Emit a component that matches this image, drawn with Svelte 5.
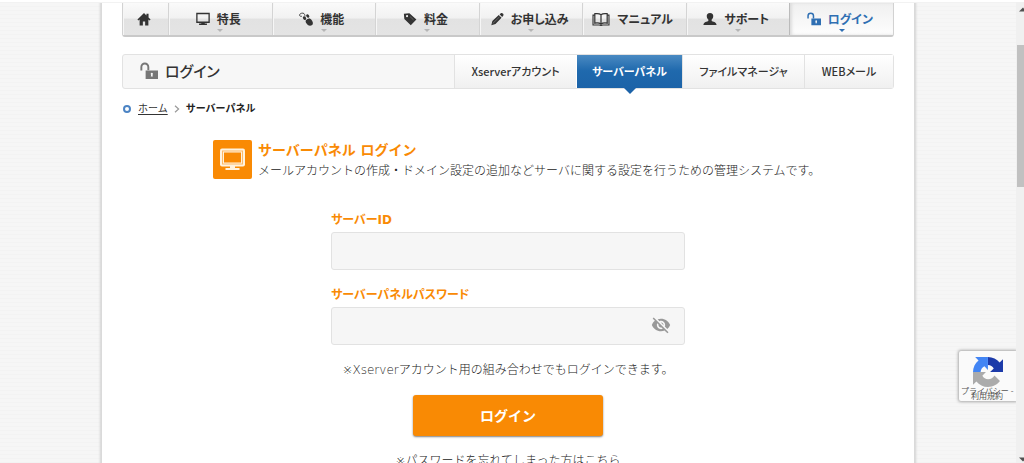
<script>
  const nav = [
    { label: '特長', icon: 'screen', menu: true },
    { label: '機能', icon: 'mouse', menu: true },
    { label: '料金', icon: 'tag', menu: true },
    { label: 'お申し込み', icon: 'pencil', menu: true },
    { label: 'マニュアル', icon: 'book', menu: false },
    { label: 'サポート', icon: 'person', menu: true },
    { label: 'ログイン', icon: 'lock', menu: true, active: true },
  ];
  const tabs = [
    { label: 'Xserverアカウント', size: 'wide' },
    { label: 'サーバーパネル', size: 'mid', active: true },
    { label: 'ファイルマネージャ', size: 'wide' },
    { label: 'WEBメール', size: 'small' },
  ];
  let visible = $state(false);
  let serverId = $state('');
  let password = $state('');
</script>

{#snippet icon(name)}
  <svg class="icon" class:large={name === 'book'} viewBox="0 0 16 16" aria-hidden="true">
    {#if name === 'home'}
      <path fill="currentColor" d="M8 1 .5 8.600l1 1L3 8.700V15.500h3.700v-4.700h2.600v4.700H13V8.700l1.500.9 1-1-2.300-2.200V1.900h-2.400V4z" />
    {:else if name === 'screen'}
      <path fill="none" stroke="currentColor" stroke-width="1.5" d="M1 1.700h14v10H1z" />
      <path fill="currentColor" d="M6 12h4v1.200h2.500v1.600h-9v-1.600H6z" />
    {:else if name === 'mouse'}
      <path fill="none" stroke="currentColor" stroke-width="1" d="M7 5C6.500 3.500 6.500 1.500 4.500 1.300 2.500 1.200.8 2 .6 3.500.6 4.800 2.200 5.200 3.400 4.800" />
      <path fill="currentColor" d="M7.800 9.500C9.200 7.900 11 6.900 12.400 7.500c2.200 1 4 4.300 3.400 6.300-.8 2.200-4 2.500-5.700 1C8.400 13.500 6.900 11 7.800 9.500z" />
      <ellipse cx="6.300" cy="7" rx="1.700" ry="2.300" fill="currentColor" transform="rotate(-35 6.300 7)" />
      <ellipse cx="10" cy="4.600" rx="1.600" ry="2.200" fill="currentColor" transform="rotate(-35 10 4.600)" />
    {:else if name === 'tag'}
      <path fill="currentColor" fill-rule="evenodd" d="M1 2 7.300 1.500l8 7-6.400 6.700L1.500 8zM4.600 3.500a1.200 1.200 0 1 0 .1 2.400 1.200 1.200 0 0 0-.1-2.400z" />
      <path d="M8 5.200l4 3.700" stroke="#777" stroke-width=".8" />
    {:else if name === 'pencil'}
      <path fill="currentColor" d="M1.500 15 2.700 10.200 10 3.500l3.200 3.200-6.900 6.900zM10.900 2.700l1.600-1.400c.7-.5 1.500-.3 2.500.8.600.8.600 1.600.1 2.200l-1.200 1.500z" />
      <path d="M3 13.300 11 5.400" stroke="#999" stroke-width=".6" />
    {:else if name === 'book'}
      <path fill="none" stroke="currentColor" stroke-width="1.100" d="M8 4.200C6.600 3 4.500 3 2.500 3.300v8.400c2-.3 4.100-.3 5.500.9 1.400-1.200 3.500-1.200 5.500-.9V3.300C11.500 3 9.400 3 8 4.200zv8.400" />
      <path fill="none" stroke="currentColor" stroke-width="1" d="M2.500 4.600H.9v8.700h5.300c1 0 1.200.5 1.800.5s.8-.5 1.800-.5h5.300V4.600h-1.600" />
    {:else if name === 'person'}
      <path fill="currentColor" d="M8 1c2.600 0 3.900 1.500 3.700 3.800-.1 1.900-.9 3.200-1.800 3.900v1.600c1 .8 5.600 1 5.600 4.500H.5c0-3.500 4.600-3.700 5.600-4.500V8.700C5.200 8 4.400 6.700 4.300 4.800 4.100 2.500 5.400 1 8 1z" />
    {:else if name === 'lock'}
      <path fill="none" stroke="currentColor" stroke-width="1.700" d="M1.200 7.500V4.400a3.100 3.100 0 0 1 6.200 0v3" />
      <path fill="currentColor" fill-rule="evenodd" d="M5 7.500h11v7.500H5zM10.500 9.500a1 1 0 0 0-.6 1.800l-.3 1.600h1.800l-.3-1.600a1 1 0 0 0-.6-1.800z" />
    {/if}
  </svg>
{/snippet}

<div class="window">
  <div class="view">
    <div class="page">
      <nav class="global" aria-label="メイン">
        <a class="home" href="#home" aria-label="ホーム">{@render icon('home')}</a>
        {#each nav as item}
          <a href="#{item.icon}" class:active={item.active} class:menu={item.menu}>
            {@render icon(item.icon)}<span>{item.label}</span>
          </a>
        {/each}
      </nav>

      <header class="titlebar">
        <h1>{@render icon('lock')}<span>ログイン</span></h1>
        <nav class="tabs" aria-label="ログイン">
          {#each tabs as tab}
            <a href="#{tab.label}" class={tab.size} class:active={tab.active}>{tab.label}</a>
          {/each}
        </nav>
      </header>

      <div class="crumbs">
        <i class="ring"></i>
        <a href="#home">ホーム</a>
        <svg class="chev" viewBox="0 0 6 8" aria-hidden="true"><path d="M1 .8 4.600 4 1 7.200" fill="none" stroke="#999" stroke-width="1.200" /></svg>
        <b>サーバーパネル</b>
      </div>

      <section class="intro">
        <svg class="badge" viewBox="0 0 39 39" aria-hidden="true">
          <rect width="39" height="39" rx="2" fill="#f98a04" />
          <rect x="7" y="8.500" width="25" height="18" rx="2" fill="#fff3df" />
          <rect x="9" y="10.500" width="21" height="14" fill="#fcb968" />
          <rect x="10" y="11.500" width="19" height="12" fill="#fff3df" />
          <rect x="11" y="12.500" width="17" height="10" fill="#f98a04" />
          <path d="M17 26h5v2h4.500v2h-14v-2H17z" fill="#fff3df" />
        </svg>
        <div>
          <h2>サーバーパネル ログイン</h2>
          <p>メールアカウントの作成・ドメイン設定の追加などサーバに関する設定を行うための管理システムです。</p>
        </div>
      </section>

      <form onsubmit={(e) => e.preventDefault()}>
        <label for="server-id">サーバーID</label>
        <input id="server-id" type="text" bind:value={serverId} />
        <label for="server-pass">サーバーパネルパスワード</label>
        <div class="field">
          <input id="server-pass" type={visible ? 'text' : 'password'} bind:value={password} />
          <button type="button" class="eye" aria-label="パスワードを表示" onclick={() => (visible = !visible)}>
            <svg viewBox="0 0 24 24" aria-hidden="true"><path fill="#999" d="M12 7c2.760 0 5 2.240 5 5 0 .650-.130 1.260-.360 1.830l2.920 2.920c1.510-1.260 2.700-2.890 3.430-4.750-1.730-4.390-6-7.500-11-7.500-1.400 0-2.740.250-3.980.700l2.160 2.160C10.740 7.130 11.350 7 12 7zM2 4.270l2.280 2.280.460.460C3.080 8.300 1.780 10.020 1 12c1.730 4.390 6 7.500 11 7.500 1.550 0 3.030-.300 4.380-.840l.420.420L19.730 22 21 20.730 3.270 3 2 4.270zM7.530 9.800l1.550 1.550c-.050.210-.080.430-.080.650 0 1.660 1.340 3 3 3 .220 0 .440-.030.650-.080l1.550 1.550c-.670.330-1.410.530-2.200.530-2.760 0-5-2.240-5-5 0-.790.200-1.530.530-2.200zm4.310-.780l3.150 3.150.020-.160c0-1.660-1.340-3-3-3l-.170.010z" /></svg>
          </button>
        </div>
        <p>※Xserverアカウント用の組み合わせでもログインできます。</p>
        <button type="submit" class="submit">ログイン</button>
        <p class="forgot">※パスワードを忘れてしまった方はこちら</p>
      </form>
    </div>

    <aside class="captcha">
      <svg viewBox="0 0 64 64" aria-hidden="true">
        <path fill="#1c3aa9" d="M64 31.960c0-.460-.010-.920-.030-1.370V4.600l-7.180 7.180C50.900 4.580 41.960 0 31.950 0v17.200c5.500.3 9.800 3 12.300 7.200L36.500 32z" />
        <path fill="#4285f4" d="M31.860 0c-.460 0-.920.010-1.370.030H4.600l7.180 7.180C4.580 13.100 0 22 0 32h16.200c.4-5.500 3.500-10.200 8.200-12.400l7.460 8z" />
        <path fill="#ababab" d="M0 32.050c0 .460.010.920.030 1.370V59.400l7.180-7.180C13.100 59.400 22.040 64 32.050 64c10.400 0 19.600-4.960 25.500-12.700L45.800 39.400c-2.600 4.700-7.700 7.900-13.600 7.900-5.200 0-9.700-3-12.300-7.300L27.600 32z" />
      </svg>
      <a class="privacy" href="#privacy">プライバシー -</a>
      <a class="terms" href="#terms">利用規約</a>
    </aside>
  </div>
  <div class="scroll" aria-hidden="true">
    <svg viewBox="0 0 8 8"><path d="M3 5.500 7 1.500 11 5.500z" fill="#505050" /></svg>
    <div class="thumb"></div>
    <svg class="down" viewBox="0 0 8 8"><path d="M3 2.500h8L7 6.500z" fill="#505050" /></svg>
  </div>
</div>

<style>
  * { box-sizing: border-box; }
  :global(body) { margin: 0; background: #fff; }
  .window {
    display: flex;
    height: 100vh;
    overflow: hidden;
    border-top: 2px solid #fff;
    font: 12px/16px "DejaVu Sans", "Noto Sans CJK JP", sans-serif;
    color: #333;
  }
  .view {
    position: relative;
    flex: 1;
    min-width: 0;
    overflow: hidden;
    border-top: 1px solid #f2f2f2;
    background: repeating-linear-gradient(#f6f6f6 0 3px, #f3f3f3 3px 4px);
  }
  .page {
    max-width: 812px;
    min-height: 100%;
    margin: 0 auto;
    padding: 0 20px;
    background: #fff;
    box-shadow: 0 0 0 1px #dadada, 0 0 2px 2px #d4d4d4;
  }
  h1, h2, p { margin: 0; }
  a { color: inherit; text-decoration: none; }
  .icon { width: 14px; height: 14px; flex: none; overflow: visible; }
  .icon.large { width: 18px; height: 18px; }

  .global {
    display: flex;
    height: 34px;
    border: 1px solid #d2d2d2;
    border-top: 0;
    border-bottom: 2px solid #c9c9c9;
    border-radius: 0 0 3px 3px;
    background: linear-gradient(#fafafa, #f1f1f1 48%, #e2e2e2 49%, #e4e4e4);
    font-family: "Noto Sans CJK JP", sans-serif;
    font-weight: 700;
    font-feature-settings: "palt";
    color: #333;
  }
  .global a {
    position: relative;
    display: flex;
    flex: 1;
    align-items: center;
    justify-content: center;
    gap: 7px;
    padding-right: 4px;
    border-left: 1px solid #d4d4d4;
    box-shadow: inset 1px 0 #f6f6f6;
  }
  .global .home { flex: 0 0 45px; border-left: 0; }
  .global .menu::after {
    content: "";
    position: absolute;
    left: 50%;
    bottom: 3px;
    margin-left: -3px;
    border: 3px solid transparent;
    border-top-color: #b5b5b5;
    border-bottom: 0;
  }
  .global .active {
    background: linear-gradient(#f0f0f0, #fdfdfd);
    border-left-color: #bbb;
    box-shadow: inset 2px 0 3px #ddd;
    color: #2f6fb3;
  }
  .global .active::after { border-top-color: #2f6fb3; }

  .titlebar {
    display: flex;
    height: 35px;
    margin-top: 17px;
    border: 1px solid #e2e2e2;
    border-radius: 3px;
    background: #f7f7f7;
    font-family: "Noto Sans CJK JP", sans-serif;
    font-feature-settings: "palt";
  }
  h1 {
    display: flex;
    flex: 1;
    align-items: center;
    gap: 7px;
    padding: 0 0 2px 17px;
    font-size: 15px;
    font-weight: 500;
    color: #333;
  }
  h1 .icon { width: 18px; height: 18px; color: #777; }
  .tabs { display: flex; color: #333; font-weight: 500; font-size: 11px; }
  .tabs a {
    position: relative;
    display: flex;
    align-items: center;
    justify-content: center;
    padding-bottom: 2px;
    border-left: 1px solid #e2e2e2;
    background: linear-gradient(#fff, #f0f0f0);
  }
  .tabs .wide { width: 122px; }
  .tabs .mid { width: 106px; }
  .tabs .small { width: 89px; }
  .tabs .active {
    background: linear-gradient(#4a8ac2, #1f69ad 48%, #1c63a8);
    border-color: #fff;
    color: #fff;
    font-weight: 700;
  }
  .tabs .active::after {
    content: "";
    position: absolute;
    top: 100%;
    left: 50%;
    margin-left: -6px;
    border: 6px solid transparent;
    border-top-color: #1c63a8;
    border-bottom: 0;
  }

  .crumbs {
    display: flex;
    align-items: center;
    height: 16px;
    margin-top: 12px;
    padding-left: 1px;
    font-size: 10px;
  }
  .ring { width: 8px; height: 8px; margin-right: 7px; border: 2px solid #4c84c4; border-radius: 50%; }
  .crumbs a { text-decoration: underline; text-underline-offset: 2px; }
  .chev { width: 6px; height: 8px; margin: 0 6px; }
  .crumbs b { color: #222; }

  .intro {
    display: flex;
    gap: 6px;
    max-width: 590px;
    margin: 23px auto 0;
    white-space: nowrap;
  }
  .badge { width: 39px; height: 39px; flex: none; }
  h2 { font-size: 14px; line-height: 20px; color: #f98a04; }
  .intro p { line-height: 22px; }

  form { display: flex; flex-direction: column; max-width: 354px; margin: 30px auto 0; }
  label { height: 16px; margin-bottom: 4px; font-weight: 700; font-feature-settings: "palt"; color: #f98a04; }
  input {
    width: 100%;
    height: 38px;
    margin: 0 0 17px;
    padding: 0 12px;
    border: 1px solid #e2e2e2;
    border-radius: 3px;
    background: #f6f6f6;
    font-size: 14px;
  }
  .field { position: relative; }
  .eye { position: absolute; top: 8px; right: 14px; width: 20px; height: 20px; padding: 0; border: 0; background: none; }
  .eye svg { display: block; width: 20px; height: 20px; }
  form p { align-self: center; white-space: nowrap; }
  .intro p, form p { font-weight: 300; color: #222; }
  .submit {
    align-self: center;
    width: 190px;
    height: 41px;
    margin: 17px 0;
    padding: 0 0 2px;
    border: 0;
    border-radius: 3px;
    background: #f98a04;
    box-shadow: 0 1px 2px rgba(0, 0, 0, 0.5);
    color: #fff;
    font: 700 14px/20px "Noto Sans CJK JP", sans-serif;
  }

  .captcha {
    position: absolute;
    right: 0;
    bottom: 62px;
    width: 57px;
    height: 50px;
    border-radius: 2px 0 0 2px;
    background: #fafafa;
    box-shadow: 0 0 3px 1px #aaa;
    font: 8px/10px "Noto Sans CJK JP", sans-serif;
    color: #555;
    white-space: nowrap;
  }
  .captcha svg { position: absolute; top: 6px; left: 14px; width: 30px; height: 30px; }
  .captcha a { position: absolute; }
  .privacy { left: 2px; top: 35px; }
  .terms { left: 12px; top: 40px; }

  .scroll { display: flex; flex-direction: column; flex: 0 0 8px; padding: 4px 0 0; background: #f0f0f0; }
  .scroll svg { width: 8px; height: 8px; }
  .thumb { height: 142px; margin: 31px 0 0 1px; background: #c1c1c1; }
  .scroll .down { margin-top: auto; }
</style>
